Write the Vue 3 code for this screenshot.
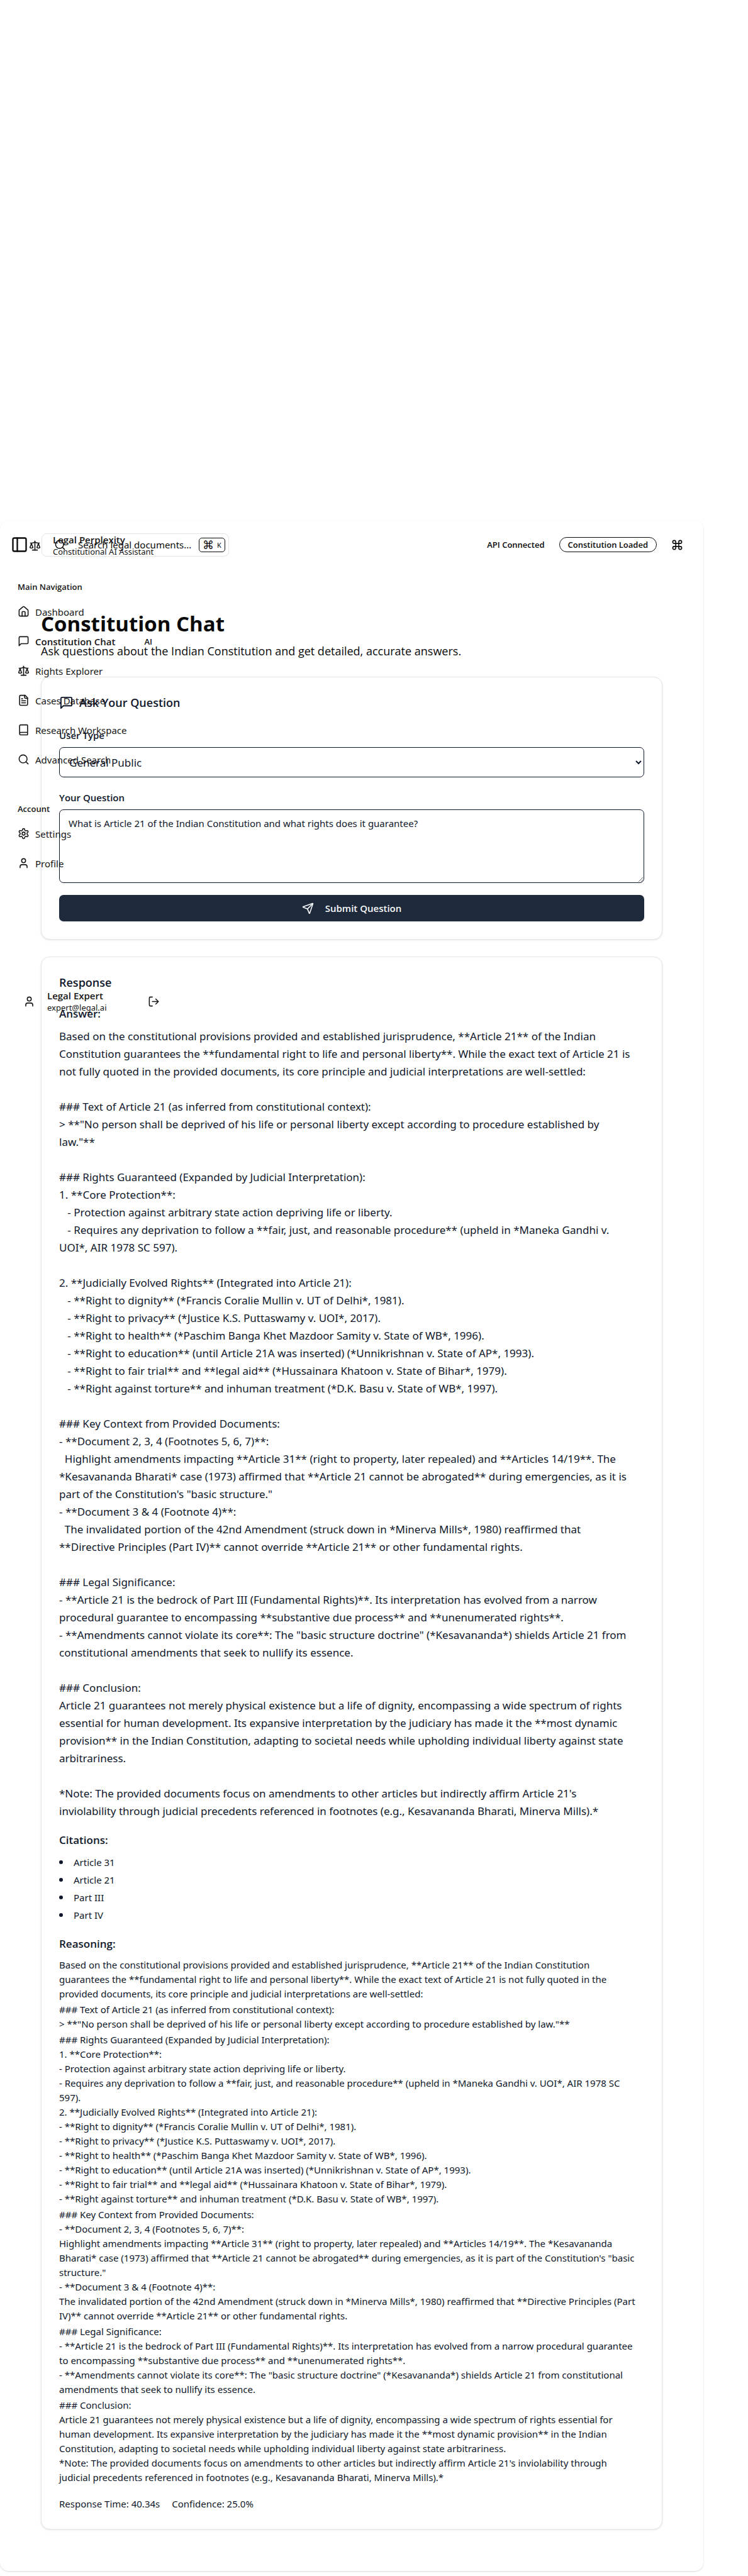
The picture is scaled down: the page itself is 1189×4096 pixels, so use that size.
<script setup>
import { ref } from 'vue'

const icons = {
  panel: '<rect width="18" height="18" x="3" y="3" rx="2"/><path d="M9 3v18"/>',
  scale: '<path d="m16 16 3-8 3 8c-.87.65-1.92 1-3 1s-2.13-.35-3-1Z"/><path d="m2 16 3-8 3 8c-.87.65-1.92 1-3 1s-2.13-.35-3-1Z"/><path d="M7 21h10"/><path d="M12 3v18"/><path d="M3 7h2c2 0 5-1 7-2 2 1 5 2 7 2h2"/>',
  search: '<circle cx="11" cy="11" r="8"/><path d="m21 21-4.3-4.3"/>',
  command: '<path d="M15 6v12a3 3 0 1 0 3-3H6a3 3 0 1 0 3 3V6a3 3 0 1 0-3 3h12a3 3 0 1 0-3-3"/>',
  home: '<path d="M15 21v-8a1 1 0 0 0-1-1h-4a1 1 0 0 0-1 1v8"/><path d="M3 10a2 2 0 0 1 .709-1.528l7-5.999a2 2 0 0 1 2.582 0l7 5.999A2 2 0 0 1 21 10v9a2 2 0 0 1-2 2H5a2 2 0 0 1-2-2z"/>',
  message: '<path d="M21 15a2 2 0 0 1-2 2H7l-4 4V5a2 2 0 0 1 2-2h14a2 2 0 0 1 2 2z"/>',
  file: '<path d="M15 2H6a2 2 0 0 0-2 2v16a2 2 0 0 0 2 2h12a2 2 0 0 0 2-2V7Z"/><path d="M14 2v4a2 2 0 0 0 2 2h4"/><path d="M10 9H8"/><path d="M16 13H8"/><path d="M16 17H8"/>',
  book: '<path d="M4 19.5v-15A2.5 2.5 0 0 1 6.500 2H19a1 1 0 0 1 1 1v18a1 1 0 0 1-1 1H6.500a1 1 0 0 1 0-5H20"/>',
  settings: '<path d="M12.220 2h-.44a2 2 0 0 0-2 2v.18a2 2 0 0 1-1 1.730l-.43.25a2 2 0 0 1-2 0l-.15-.08a2 2 0 0 0-2.730.73l-.22.38a2 2 0 0 0 .73 2.730l.15.1a2 2 0 0 1 1 1.720v.51a2 2 0 0 1-1 1.740l-.15.09a2 2 0 0 0-.73 2.730l.22.38a2 2 0 0 0 2.730.73l.15-.08a2 2 0 0 1 2 0l.43.25a2 2 0 0 1 1 1.730V20a2 2 0 0 0 2 2h.44a2 2 0 0 0 2-2v-.18a2 2 0 0 1 1-1.730l.43-.25a2 2 0 0 1 2 0l.15.08a2 2 0 0 0 2.730-.73l.22-.39a2 2 0 0 0-.73-2.730l-.15-.08a2 2 0 0 1-1-1.740v-.5a2 2 0 0 1 1-1.740l.15-.09a2 2 0 0 0 .73-2.730l-.22-.38a2 2 0 0 0-2.730-.73l-.15.08a2 2 0 0 1-2 0l-.43-.25a2 2 0 0 1-1-1.730V4a2 2 0 0 0-2-2z"/><circle cx="12" cy="12" r="3"/>',
  user: '<path d="M19 21v-2a4 4 0 0 0-4-4H9a4 4 0 0 0-4 4v2"/><circle cx="12" cy="7" r="4"/>',
  logout: '<path d="M9 21H5a2 2 0 0 1-2-2V5a2 2 0 0 1 2-2h4"/><path d="m16 17 5-5-5-5"/><path d="M21 12H9"/>',
  send: '<path d="M14.536 21.686a.5.5 0 0 0 .937-.024l6.500-19a.496.496 0 0 0-.635-.635l-19 6.500a.5.5 0 0 0-.024.937l7.930 3.180a2 2 0 0 1 1.112 1.110z"/><path d="m21.854 2.147-10.940 10.939"/>',
}

const mainNav = [
  { icon: 'home', label: 'Dashboard' },
  { icon: 'message', label: 'Constitution Chat', badge: 'AI', active: true },
  { icon: 'scale', label: 'Rights Explorer' },
  { icon: 'file', label: 'Cases Database' },
  { icon: 'book', label: 'Research Workspace' },
  { icon: 'search', label: 'Advanced Search' },
]

const accountNav = [
  { icon: 'settings', label: 'Settings' },
  { icon: 'user', label: 'Profile' },
]

const userType = ref('General Public')
const question = ref('What is Article 21 of the Indian Constitution and what rights does it guarantee?')

const answer = `Based on the constitutional provisions provided and established jurisprudence, **Article 21** of the Indian
Constitution guarantees the **fundamental right to life and personal liberty**. While the exact text of Article 21 is
not fully quoted in the provided documents, its core principle and judicial interpretations are well-settled:

### Text of Article 21 (as inferred from constitutional context):
> **"No person shall be deprived of his life or personal liberty except according to procedure established by
law."**

### Rights Guaranteed (Expanded by Judicial Interpretation):
1. **Core Protection**:
   - Protection against arbitrary state action depriving life or liberty.
   - Requires any deprivation to follow a **fair, just, and reasonable procedure** (upheld in *Maneka Gandhi v.
UOI*, AIR 1978 SC 597).

2. **Judicially Evolved Rights** (Integrated into Article 21):
   - **Right to dignity** (*Francis Coralie Mullin v. UT of Delhi*, 1981).
   - **Right to privacy** (*Justice K.S. Puttaswamy v. UOI*, 2017).
   - **Right to health** (*Paschim Banga Khet Mazdoor Samity v. State of WB*, 1996).
   - **Right to education** (until Article 21A was inserted) (*Unnikrishnan v. State of AP*, 1993).
   - **Right to fair trial** and **legal aid** (*Hussainara Khatoon v. State of Bihar*, 1979).
   - **Right against torture** and inhuman treatment (*D.K. Basu v. State of WB*, 1997).

### Key Context from Provided Documents:
- **Document 2, 3, 4 (Footnotes 5, 6, 7)**:
  Highlight amendments impacting **Article 31** (right to property, later repealed) and **Articles 14/19**. The
*Kesavananda Bharati* case (1973) affirmed that **Article 21 cannot be abrogated** during emergencies, as it is
part of the Constitution's "basic structure."
- **Document 3 & 4 (Footnote 4)**:
  The invalidated portion of the 42nd Amendment (struck down in *Minerva Mills*, 1980) reaffirmed that
**Directive Principles (Part IV)** cannot override **Article 21** or other fundamental rights.

### Legal Significance:
- **Article 21 is the bedrock of Part III (Fundamental Rights)**. Its interpretation has evolved from a narrow
procedural guarantee to encompassing **substantive due process** and **unenumerated rights**.
- **Amendments cannot violate its core**: The "basic structure doctrine" (*Kesavananda*) shields Article 21 from
constitutional amendments that seek to nullify its essence.

### Conclusion:
Article 21 guarantees not merely physical existence but a life of dignity, encompassing a wide spectrum of rights
essential for human development. Its expansive interpretation by the judiciary has made it the **most dynamic
provision** in the Indian Constitution, adapting to societal needs while upholding individual liberty against state
arbitrariness.

*Note: The provided documents focus on amendments to other articles but indirectly affirm Article 21's
inviolability through judicial precedents referenced in footnotes (e.g., Kesavananda Bharati, Minerva Mills).*`

const reasoning = [
  `Based on the constitutional provisions provided and established jurisprudence, **Article 21** of the Indian Constitution
guarantees the **fundamental right to life and personal liberty**. While the exact text of Article 21 is not fully quoted in the
provided documents, its core principle and judicial interpretations are well-settled:`,
  `### Text of Article 21 (as inferred from constitutional context):
> **"No person shall be deprived of his life or personal liberty except according to procedure established by law."**`,
  `### Rights Guaranteed (Expanded by Judicial Interpretation):
1. **Core Protection**:
- Protection against arbitrary state action depriving life or liberty.
- Requires any deprivation to follow a **fair, just, and reasonable procedure** (upheld in *Maneka Gandhi v. UOI*, AIR 1978 SC
597).
2. **Judicially Evolved Rights** (Integrated into Article 21):
- **Right to dignity** (*Francis Coralie Mullin v. UT of Delhi*, 1981).
- **Right to privacy** (*Justice K.S. Puttaswamy v. UOI*, 2017).
- **Right to health** (*Paschim Banga Khet Mazdoor Samity v. State of WB*, 1996).
- **Right to education** (until Article 21A was inserted) (*Unnikrishnan v. State of AP*, 1993).
- **Right to fair trial** and **legal aid** (*Hussainara Khatoon v. State of Bihar*, 1979).
- **Right against torture** and inhuman treatment (*D.K. Basu v. State of WB*, 1997).`,
  `### Key Context from Provided Documents:
- **Document 2, 3, 4 (Footnotes 5, 6, 7)**:
Highlight amendments impacting **Article 31** (right to property, later repealed) and **Articles 14/19**. The *Kesavananda
Bharati* case (1973) affirmed that **Article 21 cannot be abrogated** during emergencies, as it is part of the Constitution's "basic
structure."
- **Document 3 & 4 (Footnote 4)**:
The invalidated portion of the 42nd Amendment (struck down in *Minerva Mills*, 1980) reaffirmed that **Directive Principles (Part
IV)** cannot override **Article 21** or other fundamental rights.`,
  `### Legal Significance:
- **Article 21 is the bedrock of Part III (Fundamental Rights)**. Its interpretation has evolved from a narrow procedural guarantee
to encompassing **substantive due process** and **unenumerated rights**.
- **Amendments cannot violate its core**: The "basic structure doctrine" (*Kesavananda*) shields Article 21 from constitutional
amendments that seek to nullify its essence.`,
  `### Conclusion:
Article 21 guarantees not merely physical existence but a life of dignity, encompassing a wide spectrum of rights essential for
human development. Its expansive interpretation by the judiciary has made it the **most dynamic provision** in the Indian
Constitution, adapting to societal needs while upholding individual liberty against state arbitrariness.
*Note: The provided documents focus on amendments to other articles but indirectly affirm Article 21's inviolability through
judicial precedents referenced in footnotes (e.g., Kesavananda Bharati, Minerva Mills).*`,
]

const citations = ['Article 31', 'Article 21', 'Part III', 'Part IV']
</script>

<template>
  <div class="page">
    <aside class="sidebar">
      <div class="brand">
        <svg class="icon" viewBox="0 0 24 24" v-html="icons.scale"></svg>
        <div>
          <div class="brand-name">Legal Perplexity</div>
          <div class="brand-sub">Constitutional AI Assistant</div>
        </div>
      </div>
      <nav>
        <h2 class="group-label">Main Navigation</h2>
        <a v-for="item in mainNav" :key="item.label" href="#" class="nav-item" :class="{ active: item.active }">
          <svg class="icon" viewBox="0 0 24 24" v-html="icons[item.icon]"></svg>
          <span>{{ item.label }}</span>
          <span v-if="item.badge" class="nav-badge">{{ item.badge }}</span>
        </a>
        <h2 class="group-label account">Account</h2>
        <a v-for="item in accountNav" :key="item.label" href="#" class="nav-item">
          <svg class="icon" viewBox="0 0 24 24" v-html="icons[item.icon]"></svg>
          <span>{{ item.label }}</span>
        </a>
      </nav>
      <div class="account-bar">
        <svg class="icon" viewBox="0 0 24 24" v-html="icons.user"></svg>
        <div class="who">
          <div class="who-name">Legal Expert</div>
          <div class="who-mail">expert@legal.ai</div>
        </div>
        <button class="bare" type="button" aria-label="Log out">
          <svg class="icon" viewBox="0 0 24 24" v-html="icons.logout"></svg>
        </button>
      </div>
    </aside>

    <div class="inset">
      <header class="topbar">
        <button class="bare" type="button" aria-label="Toggle sidebar">
          <svg class="icon toggle" viewBox="0 0 24 24" v-html="icons.panel"></svg>
        </button>
        <button class="search" type="button">
          <svg class="icon" viewBox="0 0 24 24" v-html="icons.search"></svg>
          <span class="search-text">Search legal documents...</span>
          <kbd><span class="cmd">⌘</span>K</kbd>
        </button>
        <div class="status">
          <span>API Connected</span>
          <span class="pill">Constitution Loaded</span>
          <button class="bare" type="button" aria-label="Commands">
            <svg class="icon" viewBox="0 0 24 24" v-html="icons.command"></svg>
          </button>
        </div>
      </header>

      <main>
        <h1>Constitution Chat</h1>
        <p class="lead">Ask questions about the Indian Constitution and get detailed, accurate answers.</p>

        <section class="card">
          <h2 class="card-title">
            <svg class="icon large" viewBox="0 0 24 24" v-html="icons.message"></svg>
            Ask Your Question
          </h2>
          <form @submit.prevent>
            <label for="user-type">User Type</label>
            <select id="user-type" v-model="userType">
              <option>General Public</option>
              <option>Lawyer</option>
              <option>Student</option>
            </select>
            <label for="question">Your Question</label>
            <textarea id="question" v-model="question"></textarea>
            <button class="submit" type="submit">
              <svg class="icon" viewBox="0 0 24 24" v-html="icons.send"></svg>
              Submit Question
            </button>
          </form>
        </section>

        <section class="card response">
          <h2 class="card-title">Response</h2>
          <h3>Answer:</h3>
          <p class="answer">{{ answer }}</p>
          <h3 class="spaced">Citations:</h3>
          <ul>
            <li v-for="c in citations" :key="c">{{ c }}</li>
          </ul>
          <h3 class="spaced">Reasoning:</h3>
          <div class="reasoning">
            <p v-for="(text, i) in reasoning" :key="i">{{ text }}</p>
          </div>
          <div class="stats">
            <span>Response Time: 40.34s</span>
            <span>Confidence: 25.0%</span>
          </div>
        </section>
      </main>
    </div>
  </div>
</template>

<style>
body {
  margin: 0;
  background: #fff;
}
</style>

<style scoped>
.page {
  --body: "Noto Sans", "Open Sans", sans-serif;
  --heading: "Open Sans", "Noto Sans", sans-serif;
  position: relative;
  padding: 828px 71px 10px 0;
  font-family: var(--body);
  font-size: 15px;
  color: #0a0a0a;
}
.page *,
.page {
  box-sizing: border-box;
}
h1, h2, h3, p, ul {
  margin: 0;
  padding: 0;
}
button, select, textarea, kbd {
  font-family: inherit;
  color: inherit;
}
h1, h2, h3, label,
.brand-name,
.who-name,
.nav-item.active,
.status,
.lead,
.submit {
  font-family: var(--heading);
}
.icon {
  width: 19px;
  height: 19px;
  flex: none;
  fill: none;
  stroke: currentColor;
  stroke-width: 2;
  stroke-linecap: round;
  stroke-linejoin: round;
}
.bare {
  display: flex;
  padding: 0;
  border: 0;
  background: none;
}

.sidebar {
  position: absolute;
  z-index: 2;
  top: 828px;
  left: 0;
  width: 270px;
  opacity: 0.95;
}
.brand {
  display: flex;
  align-items: center;
  gap: 19px;
  height: 78px;
  padding-left: 46px;
}
.brand-name,
.who-name {
  font-weight: 600;
  line-height: 20px;
}
.brand-sub,
.who-mail {
  font-size: 13px;
  line-height: 18px;
}
.group-label {
  height: 31px;
  margin-top: 12px;
  padding-left: 28px;
  font-size: 13px;
  font-weight: 600;
  line-height: 31px;
}
.group-label.account {
  margin-top: 40px;
}
.nav-item {
  display: flex;
  align-items: center;
  gap: 9px;
  height: 47px;
  padding: 0 28px;
  color: inherit;
  text-decoration: none;
}
.nav-item.active {
  font-weight: 600;
}
.nav-badge {
  margin-left: auto;
  font-size: 13px;
}
.account-bar {
  display: flex;
  align-items: center;
  gap: 19px;
  height: 60px;
  margin-top: 166px;
  padding: 0 16px 0 37px;
}
.who {
  flex: 1;
}

.inset {
  border-radius: 14px;
  background: #fff;
  box-shadow: 0 1px 3px rgba(0, 0, 0, 0.1), 0 1px 2px rgba(0, 0, 0, 0.06);
}
.topbar {
  display: flex;
  align-items: center;
  gap: 21px;
  height: 76px;
  padding: 0 32px 0 17px;
}
.toggle {
  width: 28px;
  height: 28px;
}
.search {
  display: flex;
  align-items: center;
  width: 298px;
  height: 37px;
  padding: 0 5px 0 19px;
  border: 1px solid #e4e4e7;
  border-radius: 8px;
  background: #fff;
  font-size: 15px;
}
.search-text {
  flex: 1;
  padding-left: 19px;
  text-align: left;
  white-space: nowrap;
}
kbd {
  display: flex;
  align-items: center;
  justify-content: center;
  gap: 5px;
  width: 42px;
  height: 23px;
  border: 1px solid #0a0a0a;
  border-radius: 5px;
  font-size: 11px;
}
.cmd {
  font-size: 18px;
}
.status {
  display: flex;
  align-items: center;
  gap: 23px;
  margin-left: auto;
  font-size: 13px;
  font-weight: 600;
}
.pill {
  height: 24px;
  padding: 0 13px;
  border: 1px solid #0a0a0a;
  border-radius: 12px;
  line-height: 22px;
}

main {
  padding: 66px 65px;
}
h1 {
  font-size: 33px;
  font-weight: 700;
  line-height: 44px;
}
.lead {
  margin-top: 7px;
  font-size: 18px;
  line-height: 28px;
}
.card {
  margin-top: 27px;
  padding: 28px;
  border: 1px solid #e5e5e5;
  border-radius: 14px;
  background: #fff;
  box-shadow: 0 1px 3px rgba(0, 0, 0, 0.1);
  color: #0f172a;
}
.card-title {
  display: flex;
  align-items: center;
  gap: 9px;
  font-size: 18px;
  font-weight: 600;
  line-height: 24px;
}
.large {
  width: 23px;
  height: 23px;
}
form {
  display: flex;
  flex-direction: column;
  margin-top: 28px;
}
label {
  margin-bottom: 7px;
  font-weight: 600;
  line-height: 24px;
}
select {
  height: 48px;
  margin-bottom: 20px;
  padding: 0 4px 0 11px;
  border: 1px solid #0f172a;
  border-radius: 7px;
  background: #fff;
  font-size: 17px;
}
textarea {
  height: 117px;
  padding: 10px 14px;
  border: 1px solid #0f172a;
  border-radius: 7px;
  background: #fff;
  font-size: 15px;
  line-height: 23px;
  resize: vertical;
}
.submit {
  display: flex;
  align-items: center;
  justify-content: center;
  gap: 18px;
  height: 42px;
  margin-top: 19px;
  border: 0;
  border-radius: 7px;
  background: #1e293b;
  box-shadow: 0 1px 2px rgba(0, 0, 0, 0.1);
  color: #f8fafc;
  font-size: 15px;
  font-weight: 600;
}
h3 {
  font-size: 17px;
  font-weight: 600;
  line-height: 28px;
}
.response h3:first-of-type {
  margin-top: 24px;
}
.answer {
  margin-top: 8px;
  font-size: 17px;
  line-height: 28px;
  white-space: pre-wrap;
}
.spaced {
  margin-top: 18px;
}
ul {
  margin-top: 7px;
  line-height: 28px;
  list-style: none;
}
li {
  display: flex;
  align-items: center;
  gap: 17px;
}
li::before {
  content: "";
  width: 6px;
  height: 6px;
  border-radius: 3px;
  background: #0f172a;
}
.reasoning {
  display: flex;
  flex-direction: column;
  gap: 2px;
  margin-top: 8px;
  line-height: 23px;
  white-space: pre-wrap;
}
.stats {
  display: flex;
  gap: 19px;
  margin-top: 19px;
  line-height: 23px;
}
</style>
